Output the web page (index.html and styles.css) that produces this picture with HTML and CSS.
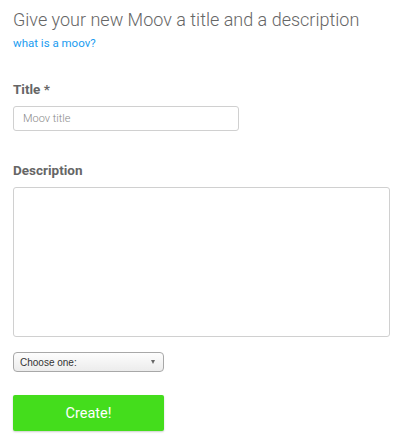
FILE: index.html
```html
<!DOCTYPE html>
<html>
<head>
<meta charset="utf-8">
<link rel="stylesheet" href="styles.css">
</head>
<body>
<form class="form">
  <h1 class="heading">Give your new Moov a title and a description</h1>
  <a class="help-link" href="#">what is a moov?</a>
  <label class="label label-title">Title *</label>
  <input class="title-input" type="text" placeholder="Moov title">
  <label class="label label-desc">Description</label>
  <textarea class="desc-input"></textarea>
  <div class="select">
    <span class="select-text">Choose one:</span>
    <span class="select-arrow"></span>
  </div>
  <button class="create-btn" type="button">Create!</button>
</form>
</body>
</html>
```
FILE: styles.css
```css
html, body {
  margin: 0;
  padding: 0;
  background: #fff;
}
body {
  padding: 8px 13px;
  font-family: Roboto, "Liberation Sans", sans-serif;
}
.form {
  display: flex;
  flex-direction: column;
  align-items: flex-start;
}
.heading {
  margin: 0;
  font-size: 18px;
  font-weight: 300;
  color: #666;
  line-height: 24px;
  white-space: nowrap;
}
.help-link {
  margin-top: 3px;
  font-size: 11.5px;
  line-height: 16px;
  color: #1a9cf0;
  text-decoration: none;
}
.label {
  font-size: 13.5px;
  font-weight: 700;
  color: #666;
  line-height: 18px;
}
.label-title {
  margin-top: 29px;
}
.title-input {
  box-sizing: border-box;
  margin-top: 8px;
  width: 226px;
  height: 25px;
  border: 1px solid #d0d0d0;
  border-radius: 3px;
  padding: 0 9px;
  font-family: Roboto, sans-serif;
  font-size: 11px;
  font-weight: 300;
  outline: none;
}
.title-input::placeholder {
  color: #888;
}
.label-desc {
  margin-top: 30px;
}
.desc-input {
  box-sizing: border-box;
  margin-top: 8px;
  width: 377px;
  height: 150px;
  border: 1px solid #d0d0d0;
  border-radius: 3px;
  resize: none;
  outline: none;
}
.select {
  box-sizing: border-box;
  margin-top: 15px;
  width: 151px;
  height: 20px;
  border: 1px solid #a8a8a8;
  border-radius: 4px;
  background: linear-gradient(#fdfdfd, #ececec);
  display: flex;
  align-items: center;
  justify-content: space-between;
  padding: 0 8px 0 6px;
}
.select-text {
  font-family: "Liberation Sans", Arial, sans-serif;
  font-size: 10px;
  color: #333;
}
.select-arrow {
  width: 0;
  height: 0;
  border-left: 2.5px solid transparent;
  border-right: 2.5px solid transparent;
  border-top: 4px solid #666;
}
.create-btn {
  margin-top: 23px;
  width: 151px;
  height: 36px;
  border: none;
  border-radius: 2px;
  background: #44dd1c;
  color: #fff;
  font-family: Roboto, sans-serif;
  font-size: 14.5px;
  font-weight: 400;
  box-shadow: 0 1px 2px rgba(0,0,0,0.2);
}
```
